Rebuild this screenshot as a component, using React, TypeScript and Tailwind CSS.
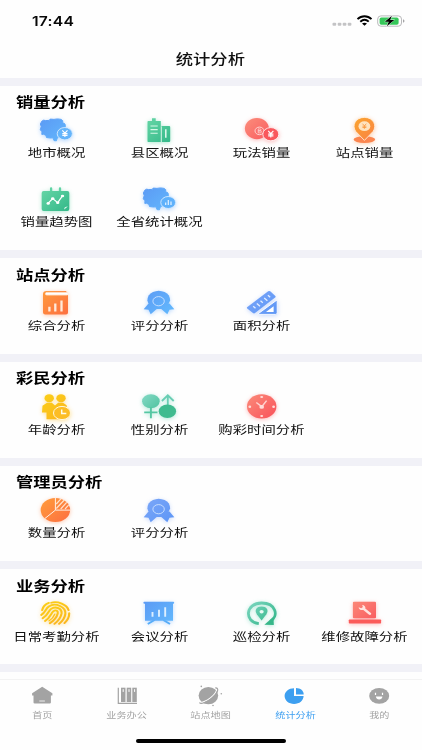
import React from 'react';

type IconProps = { id: string };

const palettes = {
  blue: ['#5c9cf5', '#62b8fd'],
  indigo: ['#7aa6f8', '#5f97f6'],
  green: ['#66d6a6', '#35b98a'],
  teal: ['#7dd6c0', '#2fb588'],
  red: ['#fb8878', '#f9555c'],
  orange: ['#fba52e', '#fa7f45'],
  tangerine: ['#ff9a3c', '#fd7040'],
  yellow: ['#fbcf17', '#fbb51f'],
} as const;

type Palette = keyof typeof palettes;

const glow: Record<Palette, string> = {
  blue: 'drop-shadow-[0_1px_2px_rgba(90,165,255,0.4)]',
  indigo: 'drop-shadow-[0_1px_2px_rgba(100,150,250,0.35)]',
  green: 'drop-shadow-[0_1px_2px_rgba(60,200,145,0.4)]',
  teal: 'drop-shadow-[0_1px_2px_rgba(60,200,160,0.4)]',
  red: 'drop-shadow-[0_1px_2px_rgba(250,90,90,0.4)]',
  orange: 'drop-shadow-[0_1px_2px_rgba(252,140,60,0.4)]',
  tangerine: 'drop-shadow-[0_1px_2px_rgba(255,125,60,0.4)]',
  yellow: 'drop-shadow-[0_1px_2px_rgba(252,190,40,0.45)]',
};

const fill = (id: string) => `url(#${id})`;

function Yuan({ x, y, s = 1, color = '#fff' }: { x: number; y: number; s?: number; color?: string }) {
  return (
    <path
      transform={`translate(${x} ${y}) scale(${s})`}
      d="M-2.6-3.2 0-.4 2.6-3.2M0-.4V3.6M-2.6.1H2.6M-2.6 1.9H2.6"
      fill="none"
      stroke={color}
      strokeWidth="1.1"
    />
  );
}

const provincePath =
  'M5.8 5.2 7.6 4.2 9.6 4.6 13.2 4.4 14.2 3.1 18 3.400 21.500 2.900 25.200 3.400 26.800 4.800 26.600 6.600 29 8 29.400 10.500 28.500 14 25.500 19.500 22.800 21 21.200 22.200 20.400 24.800 18 24.600 17 21.800 14.400 22 10.500 21.500 10 19.400 7.600 18.200 5.800 18.400 6 15.800 4.300 13.800 5.200 10.600 4.400 8Z';

function CityMap({ id }: IconProps) {
  return (
    <>
      <path d={provincePath} fill={fill(id)} stroke={fill(id)} strokeLinejoin="round" />
      <ellipse cx="28.8" cy="17.7" rx="7.6" ry="6.2" fill="#65b5fb" stroke="#d7ebfe" strokeWidth=".9" />
      <Yuan x={28.9} y={17.5} />
    </>
  );
}

function ProvinceMap({ id }: IconProps) {
  return (
    <>
      <path d={provincePath} fill={fill(id)} stroke={fill(id)} strokeLinejoin="round" />
      <ellipse cx="29.2" cy="17.5" rx="7.4" ry="6" fill="#5fb1fb" stroke="#d7ebfe" strokeWidth=".9" />
      <path d="M26.7 20v-2.6M29.3 20v-5M32 20v-3.4" stroke="#e4f2ff" strokeWidth="1.2" />
    </>
  );
}

function Buildings({ id }: IconProps) {
  return (
    <>
      <path d="M9.3 5H13V2.2h3.7V5h5.1v21H9.3a.8.8 0 0 1-.8-.8V5.8a.8.8 0 0 1 .8-.8Z" fill={fill(id)} />
      <path d="M23 10h7.2a1 1 0 0 1 1 1v14a1 1 0 0 1-1 1H21.8V10Z" fill={fill(id)} />
      <path d="M11.5 10h7.2M11.5 13.6h7.2M11.5 17.2h7.2" stroke="#d8f8e8" strokeWidth="1.1" />
      <path d="M22.4 10.3V26" stroke="#eafaf3" strokeWidth=".8" />
      <path d="M26.8 13.2v8.6" stroke="#e4faf0" strokeWidth="1.5" />
    </>
  );
}

function LotteryCoins({ id }: IconProps) {
  return (
    <>
      <ellipse cx="14.9" cy="12.6" rx="12" ry="10.6" fill={fill(id)} />
      <ellipse cx="17.5" cy="14.9" rx="4.5" ry="3.8" fill="#fa6d6b" stroke="#fde0dc" strokeWidth=".9" />
      <path d="M16.2 12.9h1.7c1.6 0 1.6 1.9 0 1.9h-1.7Zm0 1.9h2c1.7 0 1.7 2.1 0 2.1h-2Z" fill="none" stroke="#fde0dc" strokeWidth=".7" />
      <ellipse cx="28.8" cy="18.2" rx="8" ry="6.6" fill="#f9575c" stroke="#fff" strokeWidth=".8" />
      <Yuan x={28.8} y={18} />
    </>
  );
}

function StationPin({ id }: IconProps) {
  return (
    <>
      <ellipse cx="19.4" cy="23.6" rx="10.8" ry="3.4" fill="#fb8650" />
      <path d="M19.4 24.4 10.8 15.5C6.5 9.6 10.4 1.4 19.4 1.4s12.900 8.200 8.600 14.100Z" fill={fill(id)} stroke="#fff4e5" strokeWidth=".8" />
      <ellipse cx="19.4" cy="10.2" rx="5.9" ry="4.900" fill="#fee3bf" />
      <Yuan x={19.4} y={10.1} s={0.75} color="#f9953b" />
    </>
  );
}

function TrendCalendar({ id }: IconProps) {
  return (
    <>
      <path d="M15.100 3.400v4M24 3.400v4" stroke="#5fd3a4" strokeWidth="2.300" strokeLinecap="round" />
      <rect x="5.700" y="6" width="27.600" height="20" rx="2" fill={fill(id)} />
      <path d="m12.200 18.200 4.500-4.600 5 4 4.600-6.500" fill="none" stroke="#fff" strokeWidth="1.200" />
      <g fill="#fff">
        <ellipse cx="12.200" cy="18.400" rx="1.700" ry="1.300" />
        <ellipse cx="16.700" cy="13.600" rx="1.700" ry="1.300" />
        <ellipse cx="21.700" cy="17.800" rx="1.700" ry="1.300" />
        <ellipse cx="26.500" cy="11" rx="1.700" ry="1.300" />
      </g>
      <path d="M28.200 24.500c0-2.200 1.100-3 3.600-3Z" fill="#dff8ed" />
    </>
  );
}

function ReportBook({ id }: IconProps) {
  return (
    <>
      <path d="M10.500 3h19.800v1.500H10.800c-1.800 0-1.800 2.600 0 2.600H32v17.300a2 2 0 0 1-2 2H9.200a2.200 2.200 0 0 1-2.200-2V6.100C7 4.200 8.300 3 10.500 3Z" fill={fill(id)} />
      <path d="M31.500 4.400H10.700c-1.700 0-1.700 2.700 0 2.700h20.800" fill="#fff" stroke="#ffd9bd" strokeWidth=".8" />
      <path d="M13.400 23.500v-4.800M19.300 23.500v-7.900M25.500 23.500V12.600" stroke="#ffe9da" strokeWidth="2.300" />
    </>
  );
}

function Medal({ id }: IconProps) {
  return (
    <>
      <path d="M9.500 15.500 4.700 21.200l4.800.6 2.200 4.400 6-5.300h4.600l6 5.300 2.200-4.400 4.800-.6-4.800-5.700Z" fill={fill(id)} />
      <path d="m19.600 2.700 3.100.5 2.900.8 2.400 1.600 1.900 2 .9 2.300.3 2.500-1 2.400-1.300 2.200-2.300 1.700-2.800 1.100-4.100.5-3.900-.5-2.800-1.100-2.300-1.700-1.500-2.200-.7-2.400.3-2.500.9-2.300 2-2 2.400-1.600 2.800-.8Z" fill={fill(id)} />
      <ellipse cx="19.600" cy="13.200" rx="5.700" ry="4.600" fill="none" stroke="#cfe3ff" strokeWidth=".9" />
    </>
  );
}

function Rulers({ id }: IconProps) {
  return (
    <>
      <path d="M5.400 18.900 26.200 3.300q1.100-.8 2 0l5.100 4.800q.7.700-.2 1.400L13 25q-1 .8-2 0L5.200 20.400q-.8-.8.200-1.500Z" fill={fill(id)} />
      <path d="m11.200 18.200 2.300 2M14.800 15.500l3.200 2.800M18.500 12.800l2.300 2M22.200 10l3.200 2.800M25.900 7.300l2.300 2" stroke="#e4eeff" strokeWidth="1.300" />
      <path d="M15.800 26 34 12.700q1.200-.7 1.200.7v11.500q0 1.500-1.700 1.500H16.200q-.9 0-.4-.4Z" fill={fill(id)} stroke="#fff" strokeWidth=".9" />
      <path d="M24 23.900h7.600V18.200Z" fill="#fff" />
    </>
  );
}

function AgePeople({ id }: IconProps) {
  return (
    <>
      <ellipse cx="13.200" cy="6.200" rx="4.700" ry="4" fill={fill(id)} />
      <ellipse cx="25" cy="6.200" rx="4.700" ry="4" fill={fill(id)} />
      <path d="M11 10.700h4.800l3.200 2.700 3.200-2.700h4.800l3.600 2.600.8 5-3 8.900H10.500v-6.700H6l.5-6.800Z" fill={fill(id)} />
      <ellipse cx="26" cy="21" rx="8.500" ry="6.600" fill="#fcbd25" stroke="#fff8e2" strokeWidth="1" />
      <path d="M25.700 17.400v4h4.600" fill="none" stroke="#fffbe9" strokeWidth="1.500" />
    </>
  );
}

function Genders({ id }: IconProps) {
  return (
    <>
      <ellipse cx="11.900" cy="9.300" rx="8.800" ry="7" fill={fill(id)} />
      <path d="M11.900 15v11.300M5.200 20.400h13.300" stroke="#55c7a3" strokeWidth="1.900" />
      <path d="M28.800 13V4M22.900 9l5.900-5.700L34.700 9" fill="none" stroke="#69ceb4" strokeWidth="1.800" />
      <ellipse cx="28.400" cy="19.300" rx="8.700" ry="6.700" fill="#3fbb8f" />
    </>
  );
}

function Clock({ id }: IconProps) {
  return (
    <>
      <ellipse cx="19.700" cy="14.400" rx="14.700" ry="12.200" fill={fill(id)} />
      <path d="m14.300 10.500 5.500 4.200 4.800-6.100" fill="none" stroke="#ffd2cf" strokeWidth="1.500" />
      <g fill="#ffdcd9">
        <ellipse cx="19.700" cy="14.900" rx="2.300" ry="1.900" />
        <ellipse cx="19.700" cy="5" rx="1.500" ry="1.100" />
        <ellipse cx="19.700" cy="24" rx="1.500" ry="1.100" />
        <ellipse cx="7.800" cy="14.700" rx="1.400" ry="1.200" />
        <ellipse cx="31.600" cy="14.700" rx="1.400" ry="1.200" />
      </g>
    </>
  );
}

function PieSlices({ id }: IconProps) {
  return (
    <>
      <ellipse cx="19.400" cy="14" rx="14.700" ry="12.100" fill={fill(id)} />
      <path d="M19.400 1.500v12.600H34.500M19.400 14.100 8.900 22.500" fill="none" stroke="#fff1e7" strokeWidth="1" />
      <path d="m20.300 8 4.800-5.300M20.300 12.500l8-8.500M24.700 13l6-6.600M29 13l3.600-3.800" stroke="#ffe1cb" strokeWidth="1.200" />
    </>
  );
}

function Fingerprint({ id }: IconProps) {
  return (
    <g transform="translate(19.500 14.300) scale(1.220 1) rotate(24)" fill="none" stroke={fill(id)} strokeWidth="1.750" strokeLinecap="round">
      <path d="M-7.500-8.200C-3.500-12 5-12 8.500-7.200" />
      <path d="M-11.300 1.500C-12.200-2.500-11-5.500-9.200-7.300M10.200-4.700C11.700-1.500 11.800 2.500 10.700 6" />
      <path d="M-10 6.300C-7.700 2.200-9.400-.7-7.800-4C-4.500-10.300 5.500-9.300 7.600-2.800C8.600.4 8.300 5 7 8.500" />
      <path d="M-7.600 8.800C-4.500 3.500-6.500.7-5.100-2.500C-3-7 3-6.500 4.600-1.900C5.600 1.300 5 6.500 3.500 10" />
      <path d="M-4.700 10.500C-1.700 5.500-3.600 1.400-2.300-1.300C-1-3.700 1.200-3 1.700-.6C2.600 3.400 1.600 7.500-.2 11" />
      <path d="M-.2 1C.1 4.200-.5 7-1.700 9" strokeWidth="1.300" />
    </g>
  );
}

function Presentation({ id }: IconProps) {
  return (
    <>
      <path d="m15.500 21-6.700 4M24.300 21l6.700 4" stroke="#56adf8" strokeWidth="2" />
      <path d="M5.300 2.700h29q.9 0 .9 1t-.9 1H34v17H6V4.700h-.700q-.9 0-.9-1t.9-1Z" fill={fill(id)} />
      <path d="M13.500 17.700v-4.800M20 17.700v-7M26.200 17.700V8.200" stroke="#ddefff" strokeWidth="1.900" />
    </>
  );
}

function PatrolPin({ id }: IconProps) {
  return (
    <>
      <path d="M16.800 24.700C1.500 22.500 3.700 4 19.600 4 34 4 37.200 17.300 28.200 22.400" fill="none" stroke={fill(id)} strokeWidth="2.800" />
      <path d="M31.500 17.800 31.800 25.900 22.400 25.700Z" fill="#36b789" />
      <path d="m19.600 21.500-4.800-6.300c-2.800-4.200 0-7.600 4.800-7.600s7.600 3.400 4.800 7.600Z" fill={fill(id)} />
      <ellipse cx="19.600" cy="12.700" rx="2.100" ry="1.700" fill="#e6faf3" />
    </>
  );
}

function RepairLaptop({ id }: IconProps) {
  return (
    <>
      <rect x="7.900" y="2.700" width="23.100" height="16.500" rx="1" fill={fill(id)} />
      <rect x="3.800" y="20.500" width="32.300" height="3.900" rx=".7" fill="#fb5b5a" />
      <path d="M17.100 5.900c2.300.1 3.800 1.800 3.200 3.500l5.600 4.600c1.200 1.200-.7 2.700-2.100 1.600l-5.500-4.700c-2.200.7-5-.8-4.600-2.700l2.500 1 1.700-1.100Z" fill="#ffe3df" />
    </>
  );
}

type Item = { label: string; Icon: React.FC<IconProps>; tint: Palette };
type Group = { title: string; items: Item[] };

const groups: Group[] = [
  {
    title: '销量分析',
    items: [
      { label: '地市概况', Icon: CityMap, tint: 'blue' },
      { label: '县区概况', Icon: Buildings, tint: 'green' },
      { label: '玩法销量', Icon: LotteryCoins, tint: 'red' },
      { label: '站点销量', Icon: StationPin, tint: 'orange' },
      { label: '销量趋势图', Icon: TrendCalendar, tint: 'green' },
      { label: '全省统计概况', Icon: ProvinceMap, tint: 'blue' },
    ],
  },
  {
    title: '站点分析',
    items: [
      { label: '综合分析', Icon: ReportBook, tint: 'tangerine' },
      { label: '评分分析', Icon: Medal, tint: 'blue' },
      { label: '面积分析', Icon: Rulers, tint: 'indigo' },
    ],
  },
  {
    title: '彩民分析',
    items: [
      { label: '年龄分析', Icon: AgePeople, tint: 'yellow' },
      { label: '性别分析', Icon: Genders, tint: 'teal' },
      { label: '购彩时间分析', Icon: Clock, tint: 'red' },
    ],
  },
  {
    title: '管理员分析',
    items: [
      { label: '数量分析', Icon: PieSlices, tint: 'tangerine' },
      { label: '评分分析', Icon: Medal, tint: 'indigo' },
    ],
  },
  {
    title: '业务分析',
    items: [
      { label: '日常考勤分析', Icon: Fingerprint, tint: 'yellow' },
      { label: '会议分析', Icon: Presentation, tint: 'blue' },
      { label: '巡检分析', Icon: PatrolPin, tint: 'teal' },
      { label: '维修故障分析', Icon: RepairLaptop, tint: 'red' },
    ],
  },
];

function Tile({ item, id }: { item: Item; id: string }) {
  const { Icon, tint, label } = item;
  const [from, to] = palettes[tint];
  return (
    <div className="flex flex-col items-center">
      <svg width="40" height="28" viewBox="0 0 40 28" className={`overflow-visible ${glow[tint]}`}>
        <defs>
          <linearGradient id={id} gradientUnits={Icon === Fingerprint ? 'objectBoundingBox' : 'userSpaceOnUse'} x1={Icon === Fingerprint ? '0' : '8'} y1={Icon === Fingerprint ? '0' : '2'} x2={Icon === Fingerprint ? '1' : '30'} y2={Icon === Fingerprint ? '1' : '27'}>
            <stop stopColor={from} />
            <stop offset="1" stopColor={to} />
          </linearGradient>
        </defs>
        <Icon id={id} />
      </svg>
      <span className="flex h-[19px] scale-x-[1.218] items-center pb-[1.600px] text-[11.8px] leading-none whitespace-nowrap text-[#111]">
        {label}
      </span>
    </div>
  );
}

const tabs = [
  {
    label: '首页',
    icon: (
      <>
        <path d="m16.200 2.700 10.200 6.500v2.200h-1.500v7.100q0 1-1.300 1H8.800q-1.300 0-1.300-1v-7.100H6.100V9.200Z" />
        <path d="M13.300 17h5.600" stroke="#fff" strokeWidth=".8" />
      </>
    ),
  },
  {
    label: '业务办公',
    icon: (
      <>
        <path d="M7.300 3.700v15.700H26" fill="none" stroke="#a3a3a3" strokeWidth="1.200" />
        <rect x="10" y="3.700" width="4.500" height="14.300" />
        <rect x="15.700" y="3.700" width="4.500" height="14.300" />
        <rect x="21.300" y="3.700" width="4.500" height="14.300" />
        <path d="M12.200 5.200v2.700M18 5.200v2.700M23.600 5.200v2.700" stroke="#fff" strokeWidth="1" />
      </>
    ),
  },
  {
    label: '站点地图',
    icon: (
      <>
        <ellipse cx="13.400" cy="11.600" rx="9.800" ry="8.600" />
        <path d="M4.500 18.600C11 18.500 21.300 10.800 21.800 5" fill="none" stroke="#fff" strokeWidth="1.200" />
        <path d="M20.200 4c4.400-.6 2.900 5.100-3.500 10.200-5.400 4.400-11.200 6.400-12.200 4.300" fill="none" stroke="#a3a3a3" strokeWidth="1.200" />
        <circle cx="6.300" cy="2.400" r=".8" />
        <circle cx="26.300" cy="9.700" r=".8" />
        <circle cx="18" cy="21.500" r=".8" />
      </>
    ),
  },
  {
    label: '统计分析',
    icon: (
      <>
        <path d="M15 4.200V12h9.600c0 4.400-4.200 8-9.500 8s-9.500-3.600-9.500-8c0-4.300 4.200-7.800 9.400-7.800Z" />
        <path d="M17 4c4.400 0 7.700 2.800 7.700 6.400H17Z" />
      </>
    ),
  },
  {
    label: '我的',
    icon: (
      <>
        <ellipse cx="15.200" cy="11.900" rx="10" ry="7.900" />
        <path d="M11.500 8.800v2.300M18.500 8.800v2.300" stroke="#fff" strokeWidth="1.200" />
        <path d="M11.900 12.600h6.500c0 3.900-6.500 3.900-6.500 0Z" fill="#fff" />
      </>
    ),
  },
];

function StatusBar() {
  return (
    <div className="flex h-[42px] items-center justify-between pr-[16px] pl-[32px]">
      <span className="origin-left scale-x-[1.160] pt-[1px] font-[Inter] text-[13.500px] leading-none font-semibold tracking-[0.2px] text-[#080808]">
        17:44
      </span>
      <svg width="76" height="18" viewBox="0 0 76 18">
        <g fill="#c3c3c5">
          <rect x="2.500" y="10.700" width="3.700" height="3" rx="1" />
          <rect x="7.700" y="10.700" width="3.700" height="3" rx="1" />
          <rect x="12.700" y="10.700" width="3.700" height="3" rx="1" />
          <rect x="17.700" y="10.700" width="3.700" height="3" rx="1" />
        </g>
        <path d="M27.500 7.200C31.500 3.200 37.500 3.200 41.500 7.200M30.300 9.700C33 7.200 36.200 7.200 38.700 9.700" fill="none" stroke="#000" strokeWidth="1.900" />
        <path d="m34.500 13.700-2.500-2.100c1.500-1.300 3.500-1.300 5 0Z" />
        <rect x="47.700" y="3.900" width="23.800" height="10.300" rx="3.200" fill="none" stroke="#b9b9bb" />
        <rect x="49.600" y="5.500" width="19" height="7.200" rx="1.700" fill="#35c759" />
        <path d="M73 7.300q1.500.6 1.500 1.700T73 10.700Z" fill="#a5a5a7" />
        <path d="m61.900 3.700-7.100 6h4l-2 4.500 7.500-6.300h-4.100Z" fill="#000" stroke="#fff" strokeWidth=".8" paintOrder="stroke" />
      </svg>
    </div>
  );
}

export default function App() {
  return (
    <div className="flex h-[750px] w-[422px] flex-col overflow-hidden bg-[#fefefe] font-['Noto_Sans_CJK_SC',sans-serif]">
      <header className="h-[77.500px] shrink-0">
        <StatusBar />
        <h1 className="flex h-[32px] items-center justify-center pr-[1px] text-[14.200px] leading-none font-medium text-[#111]">
          <span className="scale-x-[1.218]">统计分析</span>
        </h1>
      </header>

      <main className="flex h-[601.500px] shrink-0 flex-col overflow-hidden">
        {groups.map((group, g) => (
          <section key={group.title} className="shrink-0 border-t-8 border-[#f1f1f7] pb-[18.800px] first:pb-[18.500px] nth-5:pb-[17.500px]">
            <h2 className="flex h-[30px] items-center pt-[1.400px] pl-[16px] text-[14.200px] leading-none font-bold text-black">
              <span className="origin-left scale-x-[1.218]">{group.title}</span>
            </h2>
            <div className="grid grid-cols-4 gap-y-[22px] pr-[6px] pl-[5px]">
              {group.items.map((item, i) => (
                <Tile key={item.label} item={item} id={`tint-${g}-${i}`} />
              ))}
            </div>
          </section>
        ))}
        <div className="h-[8.500px] shrink-0 bg-[#f1f1f7]" />
      </main>

      <nav className="grid shrink-0 grid-cols-5 border-t border-[#f3f3f3] pt-[4px]">
        {tabs.map((tab, i) => (
          <div key={tab.label} className={`flex flex-col items-center ${i === 3 ? 'text-[#3d9ff0]' : 'text-[#a3a3a3]'}`}>
            <svg width="32" height="24" viewBox="0 0 32 24" fill="currentColor">
              {tab.icon}
            </svg>
            <span className="flex h-[12px] scale-x-[1.218] items-center pr-[0.400px] text-[8.300px] leading-none whitespace-nowrap">
              {tab.label}
            </span>
          </div>
        ))}
      </nav>
      <div className="mx-auto mt-[19px] h-[4px] w-[150px] shrink-0 rounded-full bg-black" />
    </div>
  );
}
